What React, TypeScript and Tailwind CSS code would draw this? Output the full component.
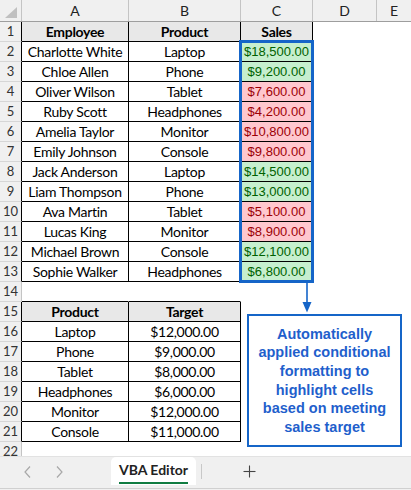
import React from "react";

type Kind = "g" | "r" | undefined;

const emp: [string, string, string, Kind][] = [
  ["Charlotte White", "Laptop", "$18,500.00", "g"],
  ["Chloe Allen", "Phone", "$9,200.00", "g"],
  ["Oliver Wilson", "Tablet", "$7,600.00", "r"],
  ["Ruby Scott", "Headphones", "$4,200.00", "r"],
  ["Amelia Taylor", "Monitor", "$10,800.00", "r"],
  ["Emily Johnson", "Console", "$9,800.00", "r"],
  ["Jack Anderson", "Laptop", "$14,500.00", "g"],
  ["Liam Thompson", "Phone", "$13,000.00", "g"],
  ["Ava Martin", "Tablet", "$5,100.00", "r"],
  ["Lucas King", "Monitor", "$8,900.00", "r"],
  ["Michael Brown", "Console", "$12,100.00", "g"],
  ["Sophie Walker", "Headphones", "$6,800.00", "g"],
];

const targets: [string, string][] = [
  ["Laptop", "$12,000.00"],
  ["Phone", "$9,000.00"],
  ["Tablet", "$8,000.00"],
  ["Headphones", "$6,000.00"],
  ["Monitor", "$12,000.00"],
  ["Console", "$11,000.00"],
];

const cellFont = { fontFamily: "Lato, 'Liberation Sans', sans-serif" };
const arialFont = { fontFamily: "'Liberation Sans', Arial, sans-serif" };

function RowHead({ n, table }: { n: number; table: boolean }) {
  return (
    <div
      className={
        "w-[22px] shrink-0 h-full flex items-center justify-center bg-[#f0f0f0] border-r border-b border-b-[#d6d6d6] text-[13px] text-[#333] " +
        (table ? "border-r-black" : "border-r-[#c4c4c4]")
      }
    >
      {n}
    </div>
  );
}

function Cell({
  w,
  text,
  line,
  bottom,
  head,
  kind,
}: {
  w: string;
  text?: string;
  line: boolean;
  bottom?: boolean;
  head?: boolean;
  kind?: Kind;
}) {
  const borders = line
    ? "border-r border-b border-black"
    : bottom
    ? "border-r border-b border-r-transparent border-b-black"
    : "border-r border-b border-transparent";
  const bg = head
    ? "bg-[#e8e8e8] font-bold"
    : kind === "g"
    ? "bg-[#c6efce] text-[#006100]"
    : kind === "r"
    ? "bg-[#ffc7ce] text-[#9c0006]"
    : "bg-white";
  const font = kind ? "text-[13px]" : "text-[14px] tracking-[-0.3px]";
  return (
    <div
      className={`${w} shrink-0 h-full flex items-center justify-center whitespace-nowrap overflow-hidden ${borders} ${bg} ${font}`}
      style={kind ? arialFont : undefined}
    >
      {text}
    </div>
  );
}

function Row({
  n,
  a,
  b,
  c,
  kind,
  mode,
}: {
  n: number;
  a?: string;
  b?: string;
  c?: string;
  kind?: Kind;
  mode: "t1" | "t1h" | "t2" | "t2h" | "pre2" | "none";
}) {
  const t1 = mode === "t1" || mode === "t1h";
  const t2 = mode === "t2" || mode === "t2h";
  const head = mode === "t1h" || mode === "t2h";
  return (
    <div className="flex h-[20px] text-black" style={cellFont}>
      <RowHead n={n} table={t1 || t2} />
      <Cell w="w-[107px]" text={a} line={t1 || t2} bottom={mode === "pre2"} head={head} />
      <Cell w="w-[112px]" text={b} line={t1 || t2} bottom={mode === "pre2"} head={head} />
      <Cell w="w-[72px]" text={c} line={t1} head={head && t1} kind={kind} />
      <Cell w="w-[64px]" line={false} />
      <div className="flex-1 h-full" />
    </div>
  );
}

function ColHead({ w, l, last }: { w: string; l: string; last?: boolean }) {
  return (
    <div
      className={`${w} ${last ? "flex-1" : "shrink-0 border-r border-r-[#c4c4c4]"} h-full flex items-center justify-center text-[14px] text-[#222]`}
    >
      {l}
    </div>
  );
}

export default function App() {
  return (
    <div className="w-[411px] h-[490px] relative overflow-hidden bg-white flex flex-col">
      <div className="flex-1 relative overflow-hidden">
        <div className="flex h-[22px] bg-[#f0f0f0] border-b border-b-[#9e9e9e]" style={cellFont}>
          <div className="w-[22px] shrink-0 h-full border-r border-r-[#c4c4c4] relative">
            <div className="absolute right-[4px] bottom-[3px] w-0 h-0 border-l-[12px] border-l-transparent border-b-[11px] border-b-[#c0c0c0]" />
          </div>
          <ColHead w="w-[107px]" l="A" />
          <ColHead w="w-[112px]" l="B" />
          <ColHead w="w-[72px]" l="C" />
          <ColHead w="w-[64px]" l="D" />
          <ColHead w="" l="E" last />
        </div>
        <Row n={1} a="Employee" b="Product" c="Sales" mode="t1h" />
        {emp.map((e, i) => (
          <Row key={i} n={i + 2} a={e[0]} b={e[1]} c={e[2]} kind={e[3]} mode="t1" />
        ))}
        <Row n={14} mode="pre2" />
        <Row n={15} a="Product" b="Target" mode="t2h" />
        {targets.map((t, i) => (
          <Row key={i} n={i + 16} a={t[0]} b={t[1]} mode="t2" />
        ))}
        <Row n={22} mode="none" />

        {/* blue rectangle around Sales values */}
        <div className="absolute left-[239px] top-[40px] w-[75px] h-[243px] border-[3px] border-[#1565c8] pointer-events-none" />

        {/* arrow */}
        <svg className="absolute left-[300px] top-[283px]" width="14" height="31" viewBox="0 0 14 31">
          <line x1="7" y1="0" x2="7" y2="20" stroke="#1565c8" strokeWidth="1.6" />
          <polygon points="2.5,19 11.5,19 7,29.5" fill="#1565c8" />
        </svg>

        {/* callout */}
        <div
          className="absolute left-[247px] top-[314px] w-[155px] h-[133px] border-2 border-[#1565c8] bg-white flex items-center justify-center text-center text-[14.5px] leading-[18.6px] font-bold text-[#1f5fcc]"
          style={arialFont}
        >
          <div>
            Automatically
            <br />
            applied conditional
            <br />
            formatting to
            <br />
            highlight cells
            <br />
            based on meeting
            <br />
            sales target
          </div>
        </div>
      </div>

      {/* sheet tab bar */}
      <div className="h-[34px] shrink-0 bg-[#f0f0f0] border-t border-t-[#e2e2e2] relative flex items-start" style={cellFont}>
        <div className="flex items-center h-[30px] pl-[23px] gap-[21px]">
          <svg width="10" height="14" viewBox="0 0 10 14">
            <polyline points="7,1.5 2,7 7,12.5" fill="none" stroke="#a8a8a8" strokeWidth="1.2" />
          </svg>
          <svg width="10" height="14" viewBox="0 0 10 14">
            <polyline points="3,1.5 8,7 3,12.5" fill="none" stroke="#a8a8a8" strokeWidth="1.2" />
          </svg>
        </div>
        <div className="ml-[47px] w-[85px] h-[28px] bg-white rounded-t-[5px] flex flex-col items-center justify-start pt-[4px]">
          <span className="text-[14px] font-bold text-[#222] leading-[17px]">VBA Editor</span>
          <div className="w-[69px] h-[2px] bg-[#107c41] mt-[4px]" />
        </div>
        <div className="ml-[5px] mt-[7px] w-px h-[15px] bg-[#c8c8c8]" />
        <div className="ml-[41px] mt-[8px]">
          <svg width="13" height="13" viewBox="0 0 13 13">
            <line x1="6.5" y1="0.5" x2="6.5" y2="12.5" stroke="#444" strokeWidth="1.1" />
            <line x1="0.5" y1="6.5" x2="12.5" y2="6.5" stroke="#444" strokeWidth="1.1" />
          </svg>
        </div>
        <div className="absolute left-0 right-0 bottom-[1px] h-px bg-[#d0d0d0]" />
      </div>
    </div>
  );
}
